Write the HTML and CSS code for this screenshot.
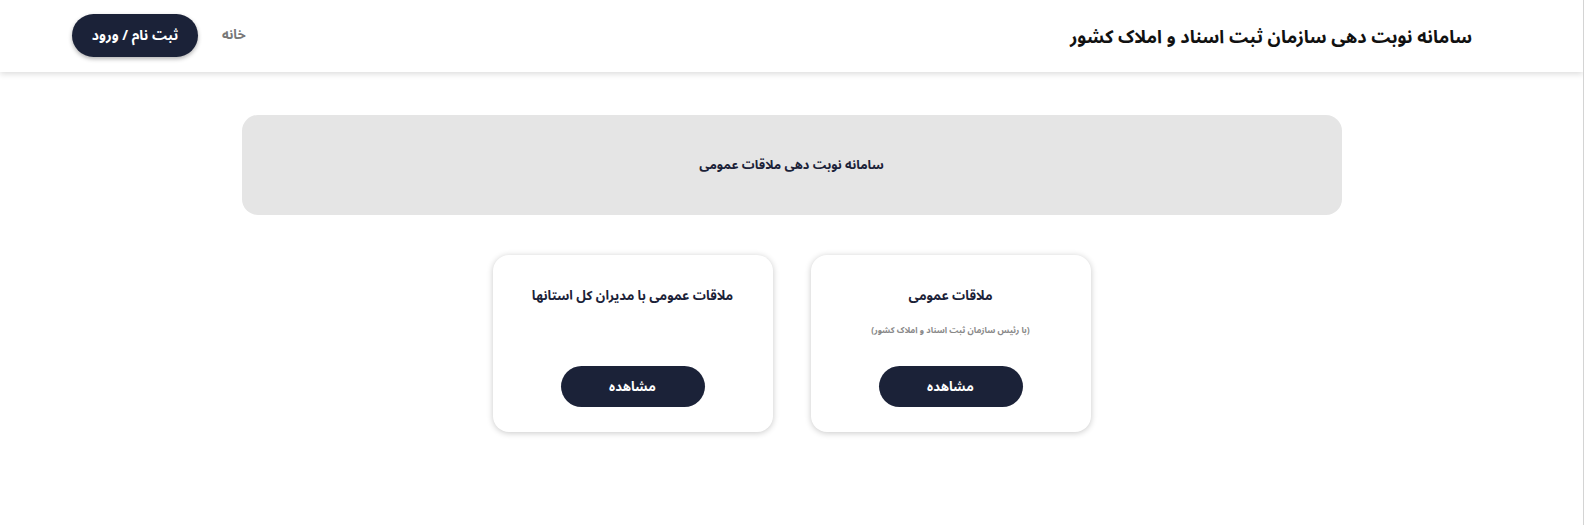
FILE: index.html
```html
<!DOCTYPE html>
<html lang="fa" dir="rtl">
<head>
  <meta charset="UTF-8">
  <meta name="viewport" content="width=device-width, initial-scale=1.0">
  <title>سامانه نوبت دهی</title>
  <link rel="stylesheet" href="styles.css">
</head>
<body>
  <!-- هدر -->
  <header class="header">
    <h1 class="header-title">سامانه نوبت دهی سازمان ثبت اسناد و املاک کشور</h1>
    <nav class="header-nav">
      <a class="nav-link" href="#">خانه</a>
      <a class="btn btn-login" href="#">ثبت نام / ورود</a>
    </nav>
  </header>

  <main class="main">
    <!-- بنر -->
    <div class="banner">سامانه نوبت دهی ملاقات عمومی</div>

    <!-- کارت ها -->
    <div class="cards">
      <div class="card">
        <div class="card-head">
          <h2 class="card-title">ملاقات عمومی</h2>
          <p class="card-sub">(با رئیس سازمان ثبت اسناد و املاک کشور)</p>
        </div>
        <a class="btn btn-view" href="#">مشاهده</a>
      </div>
      <div class="card">
        <div class="card-head">
          <h2 class="card-title">ملاقات عمومی با مدیران کل استانها</h2>
        </div>
        <a class="btn btn-view" href="#">مشاهده</a>
      </div>
    </div>
  </main>
</body>
</html>
```

FILE: styles.css
```css
* {
    box-sizing: border-box;
}

body {
    margin: 0;
    min-height: 100vh;
    background: #fff;
    color: #1b2238;
    font-family: "Noto Sans Arabic", "DejaVu Sans", sans-serif;
    border-right: 1px solid #d4d4d4;
}

a {
    text-decoration: none;
}

/* هدر */
.header {
    height: 72px;
    padding: 0 111px 0 72px;
    display: flex;
    align-items: center;
    justify-content: space-between;
    background: #fff;
    box-shadow: 0 2px 6px rgba(0, 0, 0, 0.14);
}

.header-title {
    margin: 2px 0 0;
    font-size: 18px;
    font-weight: bold;
    color: #111;
}

.header-nav {
    display: flex;
    align-items: center;
    gap: 24px;
    margin-top: -1px;
}

.nav-link {
    color: #777;
    font-size: 13px;
    font-weight: bold;
    margin-bottom: 2px;
}

.btn {
    display: flex;
    align-items: center;
    justify-content: center;
    background: #1b2238;
    color: #fff;
    font-weight: bold;
    border-radius: 999px;
}

.btn-login {
    width: 126px;
    height: 43px;
    font-size: 14px;
    box-shadow: 0 2px 4px rgba(0, 0, 0, 0.3);
}

/* محتوا */
.main {
    display: flex;
    flex-direction: column;
    align-items: center;
    padding-top: 43px;
}

.banner {
    width: 1100px;
    height: 100px;
    border-radius: 16px;
    background: #e5e5e5;
    display: flex;
    align-items: center;
    justify-content: center;
    font-size: 12.7px;
    font-weight: bold;
    color: #1b2238;
}

.cards {
    display: flex;
    gap: 38px;
    margin-top: 40px;
}

.card {
    width: 280px;
    height: 177px;
    border-radius: 16px;
    background: #fff;
    box-shadow: 0 1px 6px rgba(0, 0, 0, 0.22);
    display: flex;
    flex-direction: column;
    align-items: center;
    justify-content: space-between;
    padding: 27px 0 25px;
}

.card-head {
    text-align: center;
}

.card-title {
    margin: 0;
    font-size: 13px;
    font-weight: bold;
    color: #1b2238;
}

.card-sub {
    margin: 11px 0 0;
    font-size: 8.5px;
    font-weight: bold;
    color: #888;
}

.btn-view {
    width: 144px;
    height: 41px;
    font-size: 13px;
}
```
